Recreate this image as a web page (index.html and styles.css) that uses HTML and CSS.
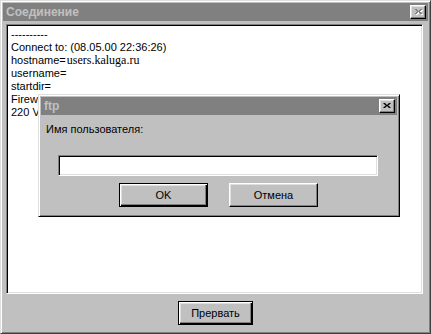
FILE: index.html
```html
<!DOCTYPE html>
<html>
<head>
<meta charset="utf-8">
<link rel="stylesheet" href="styles.css">
</head>
<body>
<div class="window">
  <div class="titlebar">
    <span class="title">Соединение</span>
    <span class="close disabled">
      <svg width="9" height="8" viewBox="0 0 9 8"><path d="M1 1h2v1h1v1h1V2h1V1h2v1H7v1H6v1h1v1h1v1H6V5H5V4H4v1H3v1H1V5h1V4h1V3H2V2H1z" fill="#fff" transform="translate(1,1)"/><path d="M1 1h2v1h1v1h1V2h1V1h2v1H7v1H6v1h1v1h1v1H6V5H5V4H4v1H3v1H1V5h1V4h1V3H2V2H1z" fill="#808080"/></svg>
    </span>
  </div>
  <div class="memo">
    <div>----------</div>
    <div>Connect to: (08.05.00 22:36:26)</div>
    <div>hostname=<span class="serif">users.kaluga.ru</span></div>
    <div>username=</div>
    <div>startdir=</div>
    <div>Firew</div>
    <div>220 V</div>
  </div>
  <div class="footer">
    <button class="btn default main-btn">Прервать</button>
  </div>

  <div class="dialog">
    <div class="titlebar">
      <span class="title">ftp</span>
      <span class="close">
        <svg width="9" height="8" viewBox="0 0 9 8"><path d="M1 1h2v1h1v1h1V2h1V1h2v1H7v1H6v1h1v1h1v1H6V5H5V4H4v1H3v1H1V5h1V4h1V3H2V2H1z" fill="#000" transform="translate(-0.5,0)"/></svg>
      </span>
    </div>
    <div class="dialog-body">
      <div class="label">Имя пользователя:</div>
      <div class="input"></div>
      <div class="buttons">
        <button class="btn default dlg-btn">OK</button>
        <button class="btn dlg-btn">Отмена</button>
      </div>
    </div>
  </div>
</div>
</body>
</html>
```

FILE: styles.css
```css
html, body {
  margin: 0;
  padding: 0;
  background: #c0c0c0;
}
body {
  font-family: "Liberation Sans", Arial, sans-serif;
  font-size: 11px;
  color: #000;
}
.window {
  position: relative;
  width: 431px;
  height: 334px;
  box-sizing: border-box;
  background: #c0c0c0;
  border: 1px solid;
  border-color: #dfdfdf #404040 #404040 #dfdfdf;
  box-shadow: inset 1px 1px #ffffff, inset -1px -1px #808080;
  padding: 2px 2px 1px 2px;
  display: flex;
  flex-direction: column;
}
.titlebar {
  height: 18px;
  background: #808080;
  display: flex;
  align-items: center;
  justify-content: space-between;
  padding: 0 2px 0 3px;
  flex: none;
}
.title {
  font-weight: bold;
  font-size: 12px;
  color: #c0c0c0;
}
.close {
  width: 16px;
  height: 14px;
  box-sizing: border-box;
  background: #c0c0c0;
  border: 1px solid;
  border-color: #ffffff #000 #000 #ffffff;
  box-shadow: inset -1px -1px #808080, inset 1px 1px #dfdfdf;
  display: flex;
  align-items: center;
  justify-content: center;
}
.close svg {
  display: block;
}
.memo {
  height: 270px;
  margin: 3px 5px 0 3px;
  box-sizing: border-box;
  background: #fff;
  border: 1px solid;
  border-color: #808080 #fff #fff #808080;
  box-shadow: inset 1px 1px #000, inset -1px -1px #dfdfdf;
  padding: 3px 4px;
  line-height: 13px;
  overflow: hidden;
  flex: none;
}
.serif {
  font-family: "Liberation Serif", "Times New Roman", serif;
  font-size: 12px;
  margin-left: 1px;
}
.footer {
  display: flex;
  justify-content: center;
  padding-top: 7px;
}
.btn {
  font-family: "Liberation Sans", Arial, sans-serif;
  font-size: 11px;
  color: #000;
  background: #c0c0c0;
  box-sizing: border-box;
  border: 1px solid;
  border-color: #fff #000 #000 #fff;
  box-shadow: inset -1px -1px #808080, inset 1px 1px #dfdfdf;
  padding: 0;
  margin: 0;
}
.btn.default {
  border: 1px solid #000;
  box-shadow: inset 1px 1px #fff, inset -1px -1px #000, inset -2px -2px #808080, inset 2px 2px #dfdfdf;
}
.main-btn {
  width: 75px;
  height: 24px;
}
.dialog {
  position: absolute;
  left: 37px;
  top: 93px;
  width: 362px;
  height: 123px;
  box-sizing: border-box;
  background: #c0c0c0;
  border: 1px solid;
  border-color: #dfdfdf #000 #000 #dfdfdf;
  box-shadow: inset 1px 1px #ffffff, inset -1px -1px #808080;
  padding: 2px;
  display: flex;
  flex-direction: column;
}
.dialog-body {
  display: flex;
  flex-direction: column;
  padding: 8px 0 0 5px;
}
.label {
  line-height: 13px;
}
.input {
  margin: 19px 0 0 12px;
  width: 320px;
  height: 21px;
  box-sizing: border-box;
  background: #fff;
  border: 1px solid;
  border-color: #808080 #fff #fff #808080;
  box-shadow: inset 1px 1px #000, inset -1px -1px #dfdfdf;
}
.buttons {
  display: flex;
  gap: 21px;
  margin: 7px 0 0 73px;
}
.dlg-btn {
  width: 89px;
  height: 24px;
}
```
